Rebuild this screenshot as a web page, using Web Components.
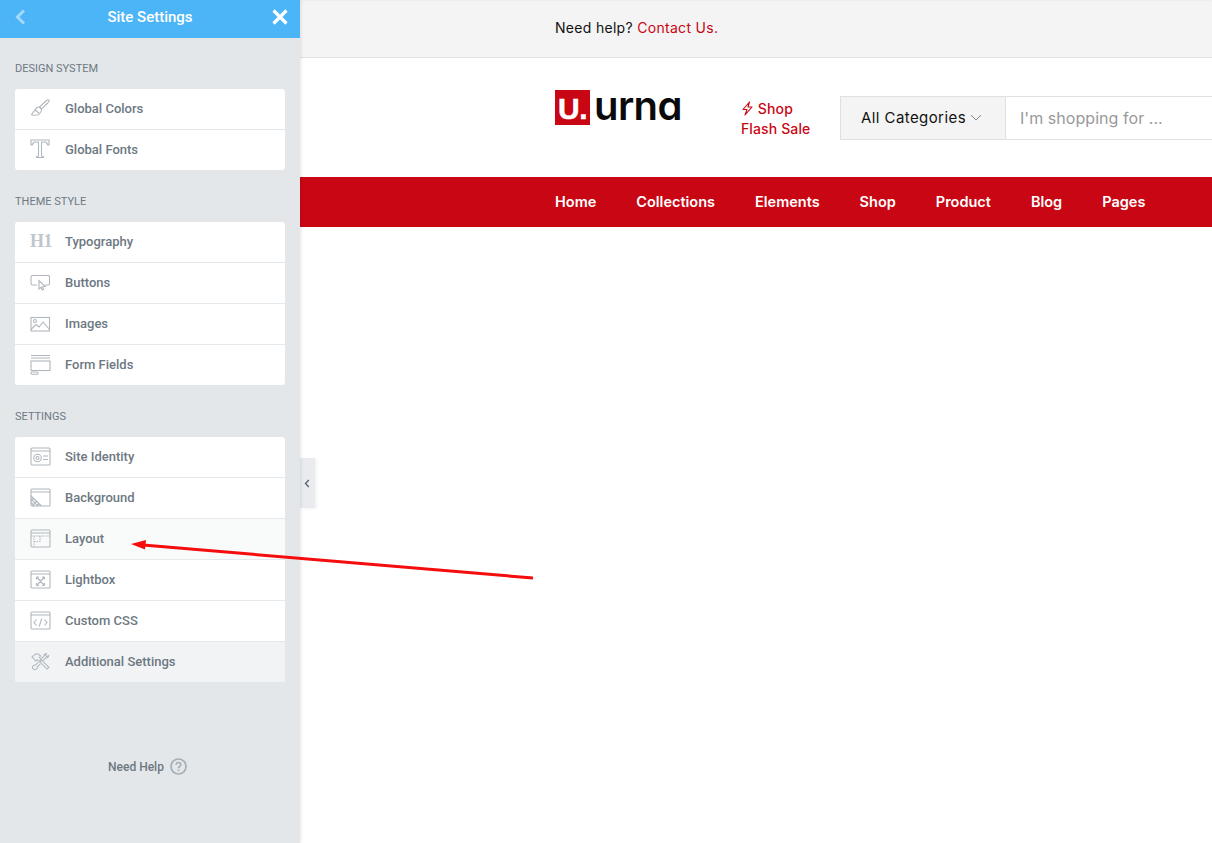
<!DOCTYPE html>
<html lang="en">
<head>
<meta charset="utf-8">
<title>Site Settings</title>
<style>
  html, body { margin: 0; height: 100%; overflow: hidden; background: #fff; }
  app-shell { height: 843px; }
</style>
</head>
<body>
<app-shell>
  <settings-panel slot="panel">
    <panel-section label="Design System">
      <panel-row icon="brush">Global Colors</panel-row>
      <panel-row icon="font">Global Fonts</panel-row>
    </panel-section>
    <panel-section label="Theme Style">
      <panel-row icon="h1">Typography</panel-row>
      <panel-row icon="button">Buttons</panel-row>
      <panel-row icon="image">Images</panel-row>
      <panel-row icon="form">Form Fields</panel-row>
    </panel-section>
    <panel-section label="Settings">
      <panel-row icon="identity">Site Identity</panel-row>
      <panel-row icon="background">Background</panel-row>
      <panel-row icon="layout" tone="hover">Layout</panel-row>
      <panel-row icon="lightbox">Lightbox</panel-row>
      <panel-row icon="css">Custom CSS</panel-row>
      <panel-row icon="tools" tone="muted">Additional Settings</panel-row>
    </panel-section>
  </settings-panel>
  <preview-page slot="page"></preview-page>
</app-shell>

<script>
// Icones du panneau, dessinees sur une grille de 21x22
const ICONS = {
  brush: `<g transform="translate(0 1.500)"><path d="M19 1.500c-1-.6-2 .1-3 1L9.500 8.600l2 2L17.800 4.500c.9-1 1.800-2.200 1.200-3z"/><path d="M9.500 8.600C7 8.300 5.800 9.800 5 11.500c-.6 1.300-2 2.200-3.500 4.800 2.700.7 6.500.7 8.300-1.300 1.300-1.400 1.900-2.800 1.700-4.400z"/><path d="M5 11.500l4.500 3.500"/></g>`,
  font: `<g transform="translate(0 1)"><path d="M1 1h18v5h-1.200c-.5-2-1.300-3-3-3H11.500v13.500c0 .8.700 1.200 2 1.200v.8H6.500v-.8c1.300 0 2-.4 2-1.200V3H5.200c-1.700 0-2.500 1-3 3H1z"/></g>`,
  button: `<g transform="translate(0 .5)"><path d="M7 13.500H2.500A1.500 1.500 0 0 1 1 12V5.500A1.500 1.500 0 0 1 2.500 4h15A1.500 1.500 0 0 1 19.500 5.500V12a1.500 1.500 0 0 1-1.500 1.500H15"/><path d="M9 9l0 8.500 2-1.800 1.200 2.800 1.500-.7-1.200-2.600 2.700-.2z"/></g>`,
  image: `<g transform="translate(0 2)"><rect x="1" y="3.500" width="18.500" height="13.500"/><circle cx="5" cy="7" r="1.500"/><path d="M1 15.500l5-5 3 2.500 4-5 6.500 7.500"/></g>`,
  form: `<g transform="translate(0 1)"><path d="M1 1.500h19M1 4h19"/><rect x="1" y="7" width="19" height="9.500"/><rect x="1" y="18" width="7" height="2.200" rx="1"/></g>`,
  identity: `<g transform="translate(0 2)"><rect x="1" y="1" width="19" height="17" rx="1"/><path d="M1 4h19"/><circle cx="7.500" cy="11" r="3.800"/><circle cx="7.500" cy="11" r="1.500"/><path d="M13 9h5M13 12.500h5"/></g>`,
  background: `<g transform="translate(0 2)"><rect x="1" y="1" width="19" height="17" rx="1"/><path d="M1 4h19"/><path d="M1 8l10.500 10M1 11l7 7M1 14.500l3.500 3.500M3.500 10.500l-2.500 2.500M6.500 13.500l-4 4M9 16l-2 2"/></g>`,
  layout: `<g transform="translate(0 2)"><rect x="1" y="1" width="19" height="17" rx="1"/><path d="M1 4h19"/><path d="M1 7h19M4 7v11M4 12.500h6V7" stroke-dasharray="1.500 1"/></g>`,
  lightbox: `<g transform="translate(0 2)"><rect x="1" y="1" width="19" height="17" rx="1"/><path d="M1 4h19"/><path d="M6.500 7h2.500M6.500 7v2.500M14.500 7h-2.500M14.500 7v2.500M6.500 15.500h2.500M6.500 15.500V13M14.500 15.500h-2.500M14.500 15.500V13M7 7.500l7 7.500M14 7.500l-7 7.500"/></g>`,
  css: `<g transform="translate(0 2)"><rect x="1" y="1" width="19" height="17" rx="1"/><path d="M1 4h19"/><path d="M6.500 8.500l-2.500 3 2.500 3M14.500 8.500l2.500 3-2.500 3M11.800 7.500l-2.600 8"/></g>`,
  tools: `<g transform="translate(.5 2.500) scale(.97 .9)"><path d="M3 6.500L1.500 5 5.500 1.500l3 .5 2 2-1.500 1.500 2 2L9 10 7 8l-1.500 1.500z"/><path d="M9.500 10.500l7.500 8 2-2-7.500-8z"/><path d="M11 7l3-3c-.4-1.500.8-3 2.500-3l-1.200 2 1.500 1.500 2-1.200c0 1.800-1.500 3-3 2.700l-3 3"/><path d="M8 11l-3 3c-1.600-.4-3 .8-3 2.500 0 1.600 1.500 2.800 3 2.500 1.300-.3 2.200-1.500 2-3l3-3"/></g>`
};

class AppShell extends HTMLElement {
  constructor() {
    super();
    this.attachShadow({ mode: 'open' });
    this.shadowRoot.innerHTML = `
      <style>
        :host { display: flex; position: relative; width: 100%; overflow: hidden; }
        .panel { flex: 0 0 300px; z-index: 2; display: flex; }
        .page { flex: 1; min-width: 0; overflow: hidden; }
        .toggle {
          position: absolute; left: 300px; top: 458px; width: 15px; height: 50px;
          background: #e9ebee; z-index: 1;
          box-shadow: 2px 1px 3px rgba(0,0,0,.05);
          display: flex; align-items: center; padding-left: 4px; box-sizing: border-box;
        }
        .toggle svg { display: block; }
        .arrow { position: absolute; left: 0; top: 0; z-index: 3; pointer-events: none; }
      </style>
      <div class="panel"><slot name="panel"></slot></div>
      <div class="page"><slot name="page"></slot></div>
      <div class="toggle">
        <svg width="6" height="9" viewBox="0 0 6 9" fill="none" stroke="#556068" stroke-width="1.300"><path d="M4.800 1L1.500 4.500l3.300 3.500"/></svg>
      </div>
      <svg class="arrow" width="1212" height="843" viewBox="0 0 1212 843">
        <path d="M533 578L143 545" stroke="#f50c0c" stroke-width="3" fill="none"/>
        <path d="M131 544l15-4-1 9.500z" fill="#f50c0c"/>
      </svg>`;
  }
}

class SettingsPanel extends HTMLElement {
  constructor() {
    super();
    this.attachShadow({ mode: 'open' });
    this.shadowRoot.innerHTML = `
      <style>
        :host {
          display: flex; flex-direction: column; width: 300px;
          background: #e4e7ea; color: #6d7882;
          font-family: Roboto, "Liberation Sans", sans-serif;
          box-shadow: 1px 0 3px rgba(0,0,0,.1);
        }
        header {
          height: 38px; flex: none; background: #4bb5f7; color: #fff;
          display: flex; align-items: center; justify-content: space-between;
          padding: 0 12px 4px 15px; box-sizing: border-box;
          font-size: 15px; font-weight: 500;
        }
        header span { margin-left: 2px; }
        header svg { display: block; }
        main { padding: 24px 15px 0; display: flex; flex-direction: column; gap: 25px; }
        footer {
          margin-top: 76px; display: flex; align-items: center; justify-content: center;
          gap: 6px; font-size: 12px; font-weight: 500;
          color: #6d7882; padding-right: 5px;
        }
        footer svg { display: block; }
      </style>
      <header>
        <svg width="11" height="16" viewBox="0 0 11 16" fill="none" stroke="#a4d8fb" stroke-width="3"><path d="M9 1.500L2.500 8 9 14.500"/></svg>
        <span>Site Settings</span>
        <svg width="16" height="16" viewBox="0 0 16 16" fill="none" stroke="#fff" stroke-width="3.200"><path d="M1.500 1.500l13 13M14.500 1.500l-13 13"/></svg>
      </header>
      <main><slot></slot></main>
      <footer>
        <span>Need Help</span>
        <svg width="17" height="17" viewBox="0 0 17 17" fill="none" stroke="#a4afb7" stroke-width="1.700">
          <circle cx="8.500" cy="8.500" r="7.500"/>
          <path d="M6.200 6.700c0-1.300 1-2.200 2.300-2.200s2.300.9 2.300 2.100c0 1.800-2.300 1.700-2.300 3.700"/>
          <path d="M8.500 11.500v1.700"/>
        </svg>
      </footer>`;
  }
}

class PanelSection extends HTMLElement {
  constructor() {
    super();
    this.attachShadow({ mode: 'open' });
    this.shadowRoot.innerHTML = `
      <style>
        :host { display: block; }
        h2 {
          margin: 0 0 13px; font-size: 11px; line-height: 14px; font-weight: 400;
          text-transform: uppercase; color: #6d7882;
        }
        .card { background: #fff; border-radius: 3px; overflow: hidden; display: flex; flex-direction: column; }
        ::slotted(panel-row:last-child) { border-bottom: 0; height: 38px; }
      </style>
      <h2></h2>
      <div class="card"><slot></slot></div>`;
    this.shadowRoot.querySelector('h2').textContent = this.getAttribute('label');
  }
}

class PanelRow extends HTMLElement {
  constructor() {
    super();
    this.attachShadow({ mode: 'open' });
    const icon = this.getAttribute('icon');
    const glyph = icon === 'h1'
      ? '<span class="h1">H1</span>'
      : `<svg width="21" height="22" viewBox="0 0 21 22" fill="none" stroke="#b0b7be" stroke-width="1.100">${ICONS[icon]}</svg>`;
    this.shadowRoot.innerHTML = `
      <style>
        :host {
          display: flex; align-items: center; height: 38px; padding-bottom: 2px;
          border-bottom: 1px solid #e6e9ec; box-sizing: content-box;
          padding-left: 15px; font-size: 13px; font-weight: 500;
        }
        :host([tone="hover"]) { background: #f9fafa; }
        :host([tone="muted"]) { background: #f1f3f5; }
        .icon { width: 35px; flex: none; display: flex; align-items: center; }
        svg { display: block; }
        .h1 {
          font: 700 18px/1 "Liberation Serif", serif; color: #c0c6cc;
          letter-spacing: -.4px;
        }
      </style>
      <div class="icon">${glyph}</div>
      <slot></slot>`;
  }
}

class PreviewPage extends HTMLElement {
  constructor() {
    super();
    this.attachShadow({ mode: 'open' });
    this.shadowRoot.innerHTML = `
      <style>
        :host {
          display: block; font-family: Inter, "Open Sans", sans-serif;
          font-size: 14px; color: #111; --gutter: 255px; --red: #c90613;
        }
        .top {
          height: 58px; box-sizing: border-box; background: #f4f4f4; border-bottom: 1px solid #e3e3e3;
          display: flex; align-items: center; padding: 0 0 2px var(--gutter);
          box-shadow: inset 0 2px 2px -1px rgba(0,0,0,.04);
        }
        .top span { white-space: pre; letter-spacing: .3px; }
        .top b { font-weight: 400; color: var(--red); }
        .mid {
          height: 119px; display: flex; align-items: center; padding-left: var(--gutter);
        }
        .logo { display: flex; align-items: center; gap: 4px; width: 186px; flex: none; margin-top: -21px; }
        .mark {
          width: 35px; height: 35px; box-sizing: border-box; padding: 2px 0 0 3px;
          background: var(--red); color: #fff; letter-spacing: -.5px;
          font: 700 30px/33px "Liberation Sans", sans-serif;
          -webkit-text-stroke: .5px #fff;
        }
        .word {
          font: 600 40px/35px Inter, sans-serif; color: #0a0a0a; letter-spacing: -.6px;
          font-feature-settings: "cv11"; margin-bottom: 4px;
        }
        .flash {
          width: 99px; flex: none; color: var(--red); font-weight: 500; line-height: 20px;
          margin-top: 3px; letter-spacing: .12px;
        }
        .flash svg { vertical-align: -2px; }
        .search {
          flex: none; width: 500px; height: 44px; box-sizing: border-box; border: 1px solid #e0e0e0;
          display: flex; align-items: center;
        }
        .cat {
          width: 165px; height: 100%; box-sizing: border-box; flex: none; background: #f4f4f4;
          border-right: 1px solid #e0e0e0; display: flex; align-items: center; gap: 4px; padding-left: 20px;
          font-size: 15px; letter-spacing: .42px;
        }
        .ph { padding-left: 14px; color: #999; font-size: 16px; letter-spacing: .05px; }
        nav {
          height: 50px; background: var(--red); color: #fff; display: flex; align-items: center;
          gap: 40px; padding: 0 0 2px var(--gutter); box-sizing: border-box;
          font-size: 14.500px; font-weight: 600; white-space: nowrap;
        }
      </style>
      <div class="top"><span>Need help? <b>Contact Us.</b></span></div>
      <div class="mid">
        <div class="logo"><div class="mark">U.</div><div class="word">urna</div></div>
        <div class="flash">
          <svg width="13" height="15" viewBox="0 0 13 15" fill="none" stroke="#c90613" stroke-width="1.100" stroke-linejoin="round"><path d="M8.500 1L2 8.500h4L4 14l7-8H7z"/></svg>
          Shop<br>Flash Sale
        </div>
        <div class="search">
          <div class="cat">All Categories
            <svg width="12" height="7" viewBox="0 0 12 7" fill="none" stroke="#888" stroke-width="1"><path d="M1 1l5 5 5-5"/></svg>
          </div>
          <div class="ph">I'm shopping for ...</div>
        </div>
      </div>
      <nav><span>Home</span><span>Collections</span><span>Elements</span><span>Shop</span><span>Product</span><span>Blog</span><span>Pages</span></nav>`;
  }
}

customElements.define('app-shell', AppShell);
customElements.define('settings-panel', SettingsPanel);
customElements.define('panel-section', PanelSection);
customElements.define('panel-row', PanelRow);
customElements.define('preview-page', PreviewPage);
</script>
</body>
</html>
